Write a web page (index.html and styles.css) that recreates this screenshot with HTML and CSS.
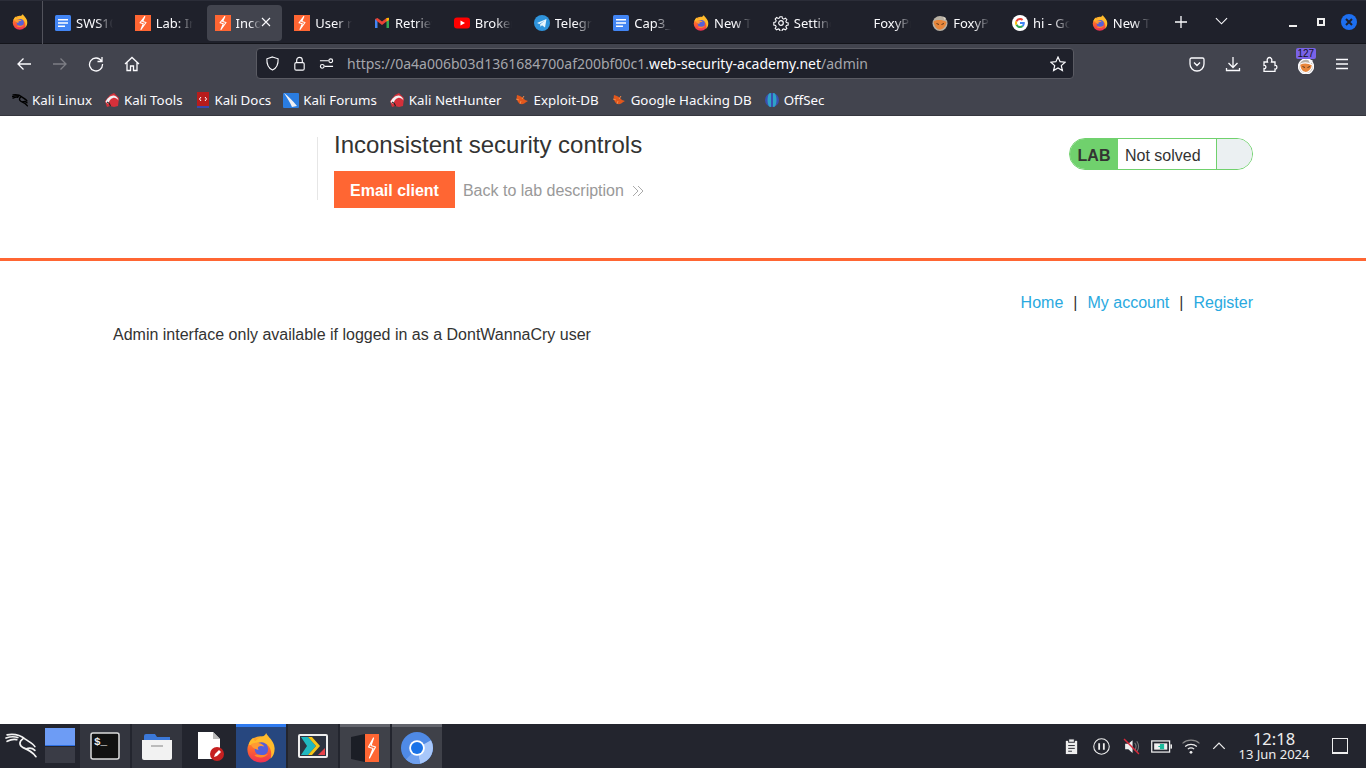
FILE: index.html
```html
<!DOCTYPE html>
<html lang="en">
<head>
    <meta charset="UTF-8">
    <meta name="viewport" content="width=device-width, initial-scale=1.0">
    <title>Inconsistent security controls</title>
    <link rel="stylesheet" href="styles.css">
</head>
<body>
    <svg class="defs" width="0" height="0">
        <defs>
            <linearGradient id="fx-body" x1="0" y1="0" x2="0" y2="1">
                <stop offset="0" stop-color="#ffb32c"/>
                <stop offset=".45" stop-color="#ff6b2c"/>
                <stop offset="1" stop-color="#ee2f54"/>
            </linearGradient>
            <symbol id="fx" viewBox="0 0 32 32">
                <circle cx="15.500" cy="17.500" r="14" fill="url(#fx-body)"/>
                <path d="M3 12C4 8 6 6 8 5c0 2 1 3 2 3.500C12 6 15 5 17 4c3-1 4-2.500 4.500-4C23 4 30 8 30.500 16c.3 5-1.500 9-4.500 11.500 2-5 1-12-4-15.500-4-3-10-3-13 0-2 .8-4 .8-6 .5z" fill="#ffbb2c"/>
                <circle cx="16.500" cy="17" r="7.200" fill="#5560d8"/>
                <path d="M5 12c3-2 8-2.500 12 0 1 .7 2 1.500 2.500 2.500-2-1-5-1-6.500.5-.6.800-.4 2 .5 3-4-.3-7-2.500-8.500-6z" fill="#ff9a33"/>
                <path d="M9 24c3 2.500 8 3 12 .5 1-.6 2-1.500 2.500-2.500-2 1-7 2-11 1-1.500 0-2.500.5-3.500 1z" fill="#ff8a2b"/>
            </symbol>
            <symbol id="doc" viewBox="0 0 16 16">
                <rect width="16" height="16" rx="1.500" fill="#4285f4"/>
                <path d="M3 4h10v1.600H3zM3 7.200h10v1.600H3zM3 10.400h7v1.600H3z" fill="#fff"/>
            </symbol>
            <symbol id="burp" viewBox="0 0 16 16">
                <rect width="16" height="16" fill="#ff6633"/>
                <path d="M9.800 1.500 5 7.800l3.300 1L6 14.500l5-7-3.300-1z" fill="none" stroke="#fff" stroke-width="1.100" stroke-linejoin="round"/>
            </symbol>
            <symbol id="gmail" viewBox="0 0 16 16">
                <path d="M1 13V4l2.500 1v8z" fill="#4285f4"/>
                <path d="M12.500 13V5L15 4v9z" fill="#34a853"/>
                <path d="M1 4l2.500-1L8 6.500 12.500 3 15 4v1l-2.500 1.500L8 10 3.500 6.500z" fill="#ea4335"/>
                <path d="M12.500 3 15 2.800V5l-2.500 1.500z" fill="#fbbc04"/>
            </symbol>
            <symbol id="yt" viewBox="0 0 16 16">
                <rect y="2.500" width="16" height="11" rx="3" fill="#f00"/>
                <path d="M6.500 5.500v5L11 8z" fill="#fff"/>
            </symbol>
            <symbol id="tg" viewBox="0 0 16 16">
                <circle cx="8" cy="8" r="8" fill="#2f94dc"/>
                <path d="M3 8l9.500-4-1.500 8.500-3-2.200-1.500 1.500-.4-2.600L11 5.500 5.300 9z" fill="#e9f5fc"/>
            </symbol>
            <symbol id="gear" viewBox="0 0 16 16">
                <circle cx="8" cy="8" r="2.300" fill="none" stroke="#fbfbfe" stroke-width="1.200"/>
                <path d="M6.800 1h2.400l.4 2 1.500.7 1.800-1.100 1.600 1.700-1.100 1.800.6 1.400 2 .5v2.300l-2 .5-.6 1.400 1.100 1.800-1.600 1.700-1.800-1.100-1.500.6-.4 2H6.800l-.4-2-1.500-.6-1.800 1.100-1.600-1.700 1.100-1.800-.6-1.400-2-.5V7.300l2-.5.6-1.400-1.100-1.800 1.600-1.700 1.800 1.100 1.500-.7z" transform="translate(.8 .8) scale(.9)" fill="none" stroke="#fbfbfe" stroke-width="1.200"/>
            </symbol>
            <symbol id="fox" viewBox="0 0 16 16">
                <circle cx="8" cy="8.500" r="7.500" fill="#b9b1a4"/>
                <path d="M1.500 6.500C5 4.500 10 4.500 14.500 7 14 12 10 15 7 14.500 4 14 2 10 1.500 6.500z" fill="#e8863a"/>
                <path d="M4.500 8.500l2.500 1M9.500 9.500l2.500-1" stroke="#5b3a1f" stroke-width="1"/>
                <path d="M11 1.500l3 1.500-1.500 2z" fill="#ddd6c8"/>
            </symbol>
            <symbol id="google" viewBox="0 0 16 16">
                <circle cx="8" cy="8" r="8" fill="#fff"/>
                <path d="M12.800 8.100c0-.4 0-.7-.1-1H8v1.900h2.700c-.1.700-.5 1.200-1 1.600l1.600 1.200c.9-.9 1.500-2.200 1.500-3.700z" fill="#4285f4"/>
                <path d="M8 13c1.300 0 2.400-.4 3.300-1.200l-1.600-1.200c-.4.300-1 .5-1.700.5-1.300 0-2.400-.9-2.800-2l-1.600 1.200C4.400 11.900 6.100 13 8 13z" fill="#34a853"/>
                <path d="M5.200 9.100c-.2-.7-.2-1.500 0-2.200L3.600 5.700c-.7 1.400-.7 3.200 0 4.600z" fill="#fbbc05"/>
                <path d="M8 5c.7 0 1.400.3 1.900.7l1.400-1.400C10.400 3.500 9.300 3 8 3 6.100 3 4.400 4.100 3.600 5.700l1.600 1.200C5.600 5.800 6.700 5 8 5z" fill="#ea4335"/>
            </symbol>
            <symbol id="kali-red" viewBox="0 0 16 16">
                <path d="M1 9l5-6 4-2 5 5-1 8-4 1-4-1-3 1z" fill="#d5303a"/>
                <path d="M1.500 10C3 6 7 3 10 3.500c2.500.5 4 2.500 4.500 5-1.500-2-3.500-3-5.500-2.500C6.500 6.500 5 9 4.500 12z" fill="#f1f1f3"/>
                <path d="M3 10c1.500.5 3 2 3.500 4" fill="none" stroke="#222" stroke-width="1.100"/>
            </symbol>
            <symbol id="bug" viewBox="0 0 16 16">
                <path d="M3 3c3 .5 6 2.500 8 5l3 1-2.500 1.500C9 13 6 12.500 4 10 2.500 8 2.500 5 3 3z" fill="#e2571c"/>
                <path d="M2 7l3 1M6 12l1-3M10 4 8 7" stroke="#f08a4a" stroke-width="1"/>
            </symbol>
            <symbol id="dragon" viewBox="0 0 30 24">
                <g fill="none" stroke="currentColor" stroke-linecap="round">
                    <path d="M2 2.500C8 1.500 14 2.500 19 6.500c3 2.200 7 4 9 7"/>
                    <path d="M1 5.500C5 4 9 4 12 5"/>
                    <path d="M2 8.500C5 7 8 6 11 7"/>
                    <path d="M17 6c-4 2.500-4 6.500 0 8.500 5 2 9 4 12 8.500"/>
                    <path d="M20 15.500c3-1 6-.5 8 1.500"/>
                </g>
            </symbol>
        </defs>
    </svg>

    <div class="tabbar">
        <div class="tab-menu"><svg class="ico16"><use href="#fx"/></svg></div>
        <div class="tabs">
            <div class="tab"><svg class="ico16"><use href="#doc"/></svg><span class="tab-label">SWS101</span></div>
            <div class="tab"><svg class="ico16"><use href="#burp"/></svg><span class="tab-label">Lab: Inconsistent</span></div>
            <div class="tab active"><svg class="ico16"><use href="#burp"/></svg><span class="tab-label">Inconsistent</span>
                <svg class="tab-close" viewBox="0 0 10 10"><path d="M1 1l8 8M9 1l-8 8"/></svg>
            </div>
            <div class="tab"><svg class="ico16"><use href="#burp"/></svg><span class="tab-label">User role</span></div>
            <div class="tab"><svg class="ico16"><use href="#gmail"/></svg><span class="tab-label">Retrieve</span></div>
            <div class="tab"><svg class="ico16"><use href="#yt"/></svg><span class="tab-label">Broken</span></div>
            <div class="tab"><svg class="ico16"><use href="#tg"/></svg><span class="tab-label">Telegram</span></div>
            <div class="tab"><svg class="ico16"><use href="#doc"/></svg><span class="tab-label">Cap3_</span></div>
            <div class="tab"><svg class="ico16"><use href="#fx"/></svg><span class="tab-label">New Tab</span></div>
            <div class="tab"><svg class="ico16"><use href="#gear"/></svg><span class="tab-label">Settings</span></div>
            <div class="tab"><span class="ico16"></span><span class="tab-label">FoxyProxy</span></div>
            <div class="tab"><svg class="ico16"><use href="#fox"/></svg><span class="tab-label">FoxyProxy</span></div>
            <div class="tab"><svg class="ico16"><use href="#google"/></svg><span class="tab-label">hi - Google</span></div>
            <div class="tab"><svg class="ico16"><use href="#fx"/></svg><span class="tab-label">New Tab</span></div>
        </div>
        <svg class="tab-plus" viewBox="0 0 14 14"><path d="M7 1v12M1 7h12"/></svg>
        <svg class="tab-list" viewBox="0 0 14 8"><path d="M1 1l6 6 6-6"/></svg>
        <div class="win-btns">
            <span class="win-min"></span>
            <span class="win-max"></span>
            <span class="win-close"><svg viewBox="0 0 10 10"><path d="M2 2l6 6M8 2l-6 6"/></svg></span>
        </div>
    </div>

    <div class="toolbar">
        <button class="tb-btn"><svg viewBox="0 0 16 16"><path d="M15 8H2M7.500 2.500 2 8l5.500 5.500"/></svg></button>
        <button class="tb-btn dim"><svg viewBox="0 0 16 16"><path d="M1 8h13M8.500 2.500 14 8l-5.500 5.500"/></svg></button>
        <button class="tb-btn"><svg viewBox="0 0 16 16"><path d="M13.500 5A6.500 6.500 0 1 0 14.500 8M14 1v4.500H9.500"/></svg></button>
        <button class="tb-btn"><svg viewBox="0 0 16 16"><path d="M1 8l7-6.500L15 8M3 6.500V14.500h3.500V10h3v4.500H13V6.500"/></svg></button>
        <div class="urlbar">
            <svg class="url-ico" viewBox="0 0 16 16"><path d="M8 1l6 2c.3 6-1.500 10-6 12C3.500 13 1.700 9 2 3z"/></svg>
            <svg class="url-ico" viewBox="0 0 16 16"><rect x="3" y="7" width="10" height="8" rx="1.500"/><path d="M5 7V4.500a3 3 0 0 1 6 0V7"/></svg>
            <svg class="url-ico" viewBox="0 0 16 16"><circle cx="3.500" cy="11" r="2"/><circle cx="12.500" cy="5" r="2"/><path d="M1 5h9M6 11h9"/></svg>
            <span class="url-text">https://0a4a006b03d1361684700af200bf00c1.<b>web-security-academy.net</b>/admin</span>
            <svg class="url-star" viewBox="0 0 16 16"><path d="M8 1l2.100 4.700 5 .5-3.800 3.400 1.100 5L8 12l-4.400 2.600 1.100-5L.9 6.200l5-.5z"/></svg>
        </div>
        <div class="tb-right">
            <button class="tb-btn"><svg viewBox="0 0 16 16"><path d="M2.500 2h11c.8 0 1.500.7 1.500 1.500V8a7 7 0 0 1-14 0V3.500C1 2.700 1.700 2 2.500 2zM5 6.500l3 3 3-3"/></svg></button>
            <button class="tb-btn"><svg viewBox="0 0 16 16"><path d="M8 1v10M3.500 7 8 11.500 12.500 7M1.500 12v2.500h13V12"/></svg></button>
            <button class="tb-btn"><svg viewBox="0 0 16 16"><path d="M2 6h3.500c-1-3 .5-4.500 2-4.500S10.500 3 9.500 6H13v3.500c2.500-.8 2.500 4 0 3.500v2.500H2v-3c2.500.8 2.500-3.800 0-3z"/></svg></button>
            <button class="tb-btn fox-btn"><svg class="ico16"><use href="#fox"/></svg><span class="badge">127</span></button>
            <button class="tb-btn"><svg viewBox="0 0 16 16"><path d="M2 3.500h12M2 8h12M2 12.500h12"/></svg></button>
        </div>
    </div>

    <div class="bookmarks">
        <a class="bm"><svg class="ico16 drag"><use href="#dragon"/></svg>Kali Linux</a>
        <a class="bm"><svg class="ico16"><use href="#kali-red"/></svg>Kali Tools</a>
        <a class="bm"><svg class="ico16" viewBox="0 0 16 16"><rect x="2" y="0" width="12" height="16" fill="#b71c1c"/><rect x="2" y="14" width="12" height="2" fill="#3949ab"/><path d="M6 5 4.500 7 6 9M10 5l1.500 2L10 9" stroke="#fff" fill="none"/></svg>Kali Docs</a>
        <a class="bm"><svg class="ico16" viewBox="0 0 16 16"><rect y="1" width="16" height="15" rx="1" fill="#2a7de1"/><path d="M1 1c4 3 9 8 13 13L9 15C7 10 4 6 1 1z" fill="#f0f0f2"/></svg>Kali Forums</a>
        <a class="bm"><svg class="ico16"><use href="#kali-red"/></svg>Kali NetHunter</a>
        <a class="bm"><svg class="ico16"><use href="#bug"/></svg>Exploit-DB</a>
        <a class="bm"><svg class="ico16"><use href="#bug"/></svg>Google Hacking DB</a>
        <a class="bm"><svg class="ico16" viewBox="0 0 16 16"><circle cx="8" cy="8" r="7" fill="#3a4fb0"/><path d="M5 1.500C3 5 3 11 5 14.500L7 15V1zM11 1.500c2 3.500 2 9.500 0 13L9 15V1z" fill="#2ea3c7"/></svg>OffSec</a>
    </div>

    <main class="page">
        <section class="lab-header">
            <div class="lab-title-block">
                <h2>Inconsistent security controls</h2>
                <div class="lab-links">
                    <a class="btn-email">Email client</a>
                    <a class="back-link">Back to lab description
                        <svg viewBox="0 0 12 12"><path d="M1 1l5 5-5 5M6 1l5 5-5 5"/></svg>
                    </a>
                </div>
            </div>
            <div class="lab-status">
                <span class="lab-tag">LAB</span>
                <span class="lab-state">Not solved</span>
                <span class="lab-end"></span>
            </div>
        </section>
        <section class="content">
            <nav class="top-links">
                <a>Home</a><span>|</span><a>My account</a><span>|</span><a>Register</a>
            </nav>
            <p class="notice">Admin interface only available if logged in as a DontWannaCry user</p>
        </section>
    </main>

    <footer class="taskbar">
        <div class="kali-start"><svg class="dragon" viewBox="0 0 30 24"><use href="#dragon"/></svg></div>
        <div class="pager"><span class="desk on"></span><span class="desk"></span></div>
        <div class="task open">
            <svg viewBox="0 0 30 28"><rect x="1" y="1" width="28" height="26" rx="2" fill="#111" stroke="#dcdcdc" stroke-width="1.500"/><text x="4" y="13" class="term-text">$_</text></svg>
        </div>
        <div class="task open">
            <svg viewBox="0 0 30 28"><path d="M2 4q0-2 2-2h9l2 3h13v6H2z" fill="#3b78d8"/><path d="M0 8h30v18q0 2-2 2H2q-2 0-2-2z" fill="#f2f2f2"/><rect x="9" y="13" width="12" height="2" fill="#bbb"/></svg>
        </div>
        <div class="task">
            <svg viewBox="0 0 30 30"><path d="M4 1h15l7 7v20H4z" fill="#fff"/><path d="M19 1l7 7h-7z" fill="#bbb"/><circle cx="23" cy="23" r="7" fill="#c62020"/><path d="M20 26l1-3 4-4 2 2-4 4z" fill="#fff"/></svg>
        </div>
        <div class="task active"><svg viewBox="0 0 32 32"><use href="#fx"/></svg></div>
        <div class="task open">
            <svg viewBox="0 0 30 24"><rect x="1" y="1" width="28" height="22" rx="1" fill="#2d3340" stroke="#eee" stroke-width="2"/><path d="M3 3h7l8 9-8 9H3l6-9z" fill="#20b8c0"/><path d="M10 3h4l8 9-8 9h-4l8-9z" fill="#f5c518"/><path d="M20 21l7-7v7z" fill="#e8434a"/></svg>
        </div>
        <div class="task open bar">
            <svg viewBox="0 0 30 28"><path d="M1 3l14-3v28L1 25z" fill="#1b1e26"/><rect x="15" y="0" width="14" height="28" fill="#ff6633"/><path d="M23.500 4 18.500 13l4.500 1.500-3.500 9.500 6-11-4.500-1.500z" fill="none" stroke="#fff" stroke-width="1.200" stroke-linejoin="round"/></svg>
        </div>
        <div class="task open bar">
            <svg class="chrome" viewBox="0 0 32 32"><circle cx="16" cy="16" r="16" fill="#4f8ae6"/><path d="M30 8.300A16 16 0 0 1 19 31.700L16 16z" fill="#a8c7fa"/><path d="M19 31.700A16 16 0 0 1 5 27.600L16 16z" fill="#6fa0ee"/><circle cx="16" cy="16" r="7.800" fill="#fff"/><circle cx="16" cy="16" r="6" fill="#1a73e8"/></svg>
        </div>
        <div class="tray">
            <span class="tray-slot"><svg class="tray-ico" viewBox="0 0 16 18"><path d="M2 3h12v14H2z" fill="#eee"/><rect x="5" y="1" width="6" height="3.500" fill="#eee" stroke="#23252e"/><path d="M4.500 8h7M4.500 11h7M4.500 14h4" stroke="#23252e"/></svg></span>
            <span class="tray-slot"><svg class="tray-ico" viewBox="0 0 16 16"><circle cx="8" cy="8" r="7.300" fill="none" stroke="#eee" stroke-width="1"/><path d="M5.800 5v6M10.200 5v6" stroke="#eee" stroke-width="1.700"/></svg></span>
            <span class="tray-slot"><svg class="tray-ico" viewBox="0 0 16 16"><path d="M2 5.500h3L9 2v12l-4-3.500H2z" fill="#eee"/><path d="M11 4.500c1.500 2 1.500 5 0 7M13 3c2 3 2 7 0 10" stroke="#777" fill="none"/><path d="M1 1l14 14" stroke="#d9293a" stroke-width="1.400"/></svg></span>
            <span class="tray-slot"><svg class="tray-ico wide" viewBox="0 0 20 12"><rect x=".7" y=".7" width="17" height="10.600" fill="none" stroke="#eee" stroke-width="1.200"/><rect x="18.500" y="4" width="1.500" height="4" fill="#eee"/><rect x="3" y="3" width="12.500" height="6" fill="#eee"/><path d="M7 6h3M9 4h3v4H9z" fill="#1abc9c" stroke="#1abc9c"/></svg></span>
            <span class="tray-slot"><svg class="tray-ico wifi" viewBox="0 0 18 16"><path d="M1 5c4.500-4 11.500-4 16 0" stroke="#888" fill="none"/><path d="M3.500 8c3-2.700 8-2.700 11 0M6 10.500c1.700-1.400 4.300-1.400 6 0" stroke="#eee" fill="none"/><circle cx="9" cy="13.500" r="1.300" fill="#eee"/></svg></span>
            <svg class="tray-chev" viewBox="0 0 12 7"><path d="M1 6l5-5 5 5"/></svg>
            <div class="clock"><div class="clock-time">12:18</div><div class="clock-date">13 Jun 2024</div></div>
            <div class="show-desktop"></div>
        </div>
    </footer>
</body>
</html>
```

FILE: styles.css
```css
* {
    box-sizing: border-box;
}

html, body {
    height: 100%;
}

body {
    margin: 0;
    display: flex;
    flex-direction: column;
    height: 768px;
    overflow: hidden;
    font-family: "Noto Sans", sans-serif;
    background: #fff;
}

.defs {
    position: absolute;
}

.ico16 {
    width: 16px;
    height: 16px;
    flex: none;
    display: block;
}

/* tab strip */
.tabbar {
    height: 44px;
    flex: none;
    display: flex;
    align-items: center;
    background: #1f212b;
    border-top: 1px solid #2b2d38;
    border-bottom: 1px solid #14151b;
}

.tab-menu {
    width: 43px;
    height: 43px;
    flex: none;
    padding: 13px 0 0 12px;
    border-right: 1px solid #52535c;
}

.tabs {
    display: flex;
    margin-left: 3px;
    flex: none;
}

.tab {
    width: 79.750px;
    height: 36px;
    flex: none;
    margin-top: 2px;
    padding-left: 9px;
    display: flex;
    align-items: center;
    gap: 5px;
    position: relative;
    color: #fbfbfe;
    font-size: 13px;
    white-space: nowrap;
    overflow: hidden;
}

.tab.active::before {
    content: "";
    position: absolute;
    left: 1px;
    right: 3px;
    top: 0;
    bottom: 0;
    background: #42444e;
    border-radius: 4px;
}

.tab > * {
    position: relative;
}

.tab-label {
    width: 37px;
    overflow: hidden;
    -webkit-mask-image: linear-gradient(to right, #000 55%, transparent);
    mask-image: linear-gradient(to right, #000 55%, transparent);
}

.tab.active .tab-label {
    width: 25px;
}

.tab-close {
    position: absolute;
    left: 55px;
    top: 12px;
    width: 10px;
    height: 10px;
    fill: none;
    stroke: #fbfbfe;
    stroke-width: 1.100;
}

.tab-plus {
    width: 14px;
    height: 14px;
    margin-left: 11px;
    fill: none;
    stroke: #fbfbfe;
    stroke-width: 1.300;
    flex: none;
}

.tab-list {
    width: 13px;
    height: 8px;
    margin: -2px 0 0 27px;
    fill: none;
    stroke: #fbfbfe;
    stroke-width: 1.200;
    flex: none;
}

.win-btns {
    margin-left: auto;
    padding-right: 9px;
    display: flex;
    align-items: center;
    gap: 20px;
}

.win-min {
    width: 8px;
    height: 2px;
    margin-top: 7px;
    background: #eee;
}

.win-max {
    width: 8px;
    height: 8px;
    border: 2px solid #eee;
    margin-right: -3px;
}

.win-close {
    width: 16px;
    height: 16px;
    border-radius: 50%;
    background: #1d6ff0;
    margin-left: -1px;
    padding: 3px;
}

.win-close svg {
    display: block;
    width: 10px;
    height: 10px;
    fill: none;
    stroke: #1f212b;
    stroke-width: 2;
}

/* nav bar */
.toolbar {
    height: 40px;
    flex: none;
    display: flex;
    align-items: center;
    padding-left: 6px;
    background: #42444e;
}

.tb-btn {
    width: 36px;
    height: 32px;
    flex: none;
    padding: 0;
    border: none;
    background: none;
    display: flex;
    align-items: center;
    justify-content: center;
    position: relative;
}

.tb-btn svg {
    width: 16px;
    height: 16px;
    fill: none;
    stroke: #fbfbfe;
    stroke-width: 1.300;
}

.tb-btn.dim svg {
    stroke: #7d7e85;
}

.urlbar {
    width: 818px;
    height: 31px;
    margin: -1px 0 0 106px;
    flex: none;
    padding: 0 7px 0 8px;
    display: flex;
    align-items: center;
    gap: 12px;
    background: #1f212b;
    border: 1px solid #5a5b63;
    border-radius: 4px;
    font-size: 14px;
    color: #a5a6ab;
}

.url-ico, .url-star {
    width: 15px;
    height: 15px;
    flex: none;
    fill: none;
    stroke: #fbfbfe;
    stroke-width: 1.200;
}

.url-text {
    flex: 1;
    margin-left: 1px;
    white-space: nowrap;
}

.url-text b {
    font-weight: 400;
    color: #fbfbfe;
}

.url-star {
    width: 16px;
    height: 16px;
}

.tb-right {
    display: flex;
    margin-left: 105px;
}

.tb-right .tb-btn {
    width: 36.250px;
}

.fox-btn .badge {
    position: absolute;
    left: 8px;
    top: 0;
    width: 20px;
    height: 11px;
    background: #7a63e8;
    border-radius: 2px;
    color: #15141a;
    font-size: 10px;
    line-height: 11px;
    text-align: center;
}

.fox-btn .ico16 {
    margin-top: 4px;
}

/* bookmarks */
.bookmarks {
    height: 32px;
    flex: none;
    display: flex;
    align-items: center;
    padding: 0 0 0 12px;
    gap: 12px;
    background: #42444e;
    border-bottom: 1px solid #35363e;
    color: #fbfbfe;
    font-size: 13.330px;
    white-space: nowrap;
}

.bm {
    display: flex;
    align-items: center;
    gap: 4px;
}

.drag {
    color: #000;
    stroke-width: 2.600;
}

/* page */
.page {
    flex: 1;
    min-height: 0;
    font-family: "Liberation Sans", Arial, sans-serif;
    color: #333332;
    font-size: 16px;
}

.lab-header {
    height: 145px;
    padding: 21px 113px 0 317px;
    display: flex;
    justify-content: space-between;
    align-items: flex-start;
    border-bottom: 3px solid #ff6633;
}

.lab-title-block {
    height: 63px;
    padding-left: 16px;
    border-left: 1px solid #e6e6e6;
}

.lab-title-block h2 {
    margin: -7px 0 0;
    font-size: 24px;
    font-weight: 400;
    line-height: 30px;
    white-space: nowrap;
}

.lab-links {
    display: flex;
    align-items: center;
    margin-top: 11px;
}

.btn-email {
    height: 37px;
    padding: 0 16px;
    background: #ff6633;
    color: #fff;
    font-weight: 700;
    line-height: 39px;
    white-space: nowrap;
}

.back-link {
    margin: 2px 0 0 8px;
    display: flex;
    align-items: center;
    gap: 9px;
    color: #999;
    white-space: nowrap;
}

.back-link svg {
    width: 12px;
    height: 12px;
    margin-left: -1px;
    fill: none;
    stroke: #aaa;
    stroke-width: 1;
}

.lab-status {
    width: 184px;
    height: 32px;
    display: flex;
    margin-top: 1px;
    border: 1px solid #70d16d;
    border-radius: 16px;
    overflow: hidden;
    line-height: 32px;
}

.lab-tag {
    width: 48px;
    background: #70d16d;
    font-weight: 700;
    text-align: center;
    padding-top: 1px;
    line-height: 32px;
}

.lab-state {
    width: 99px;
    padding-left: 7px;
    line-height: 33px;
    border-right: 1px solid #70d16d;
}

.lab-end {
    flex: 1;
    background: #ebf0f2;
}

.content {
    padding: 33px 113px 0;
}

.top-links {
    display: flex;
    justify-content: flex-end;
    gap: 10px;
    line-height: 18px;
    color: #333332;
}

.top-links a {
    color: #29a9e0;
}

.notice {
    margin: 14px 0 0;
    line-height: 18px;
}

/* panel */
.taskbar {
    height: 44px;
    flex: none;
    display: flex;
    background: #23252e;
}

.kali-start {
    width: 45px;
    flex: none;
    padding: 7px 0 0 5px;
}

.dragon {
    display: block;
    width: 32px;
    height: 28px;
    color: #f2f2f2;
    stroke-width: 1.600;
}

.pager {
    width: 30px;
    flex: none;
    margin-top: 4px;
    margin-right: 5px;
    display: flex;
    flex-direction: column;
    gap: 1px;
    height: 35px;
}

.desk {
    flex: 1;
    background: #3a3c46;
}

.desk.on {
    background: #6d9cf5;
    border-bottom: 1px solid #2f6fe0;
}

.task {
    width: 50px;
    flex: none;
    margin-right: 2px;
    display: flex;
    align-items: center;
    justify-content: center;
}

.task svg {
    width: 30px;
    height: 30px;
}

.task svg.chrome {
    width: 32px;
    height: 32px;
}

.term-text {
    font-family: "Liberation Mono", monospace;
    font-size: 11px;
    font-weight: 700;
    fill: #eee;
}

.task.open {
    background: #33353e;
}

.task.bar {
    background: #3f4149;
    border-top: 3px solid #62646c;
}

.task.active {
    background: #27477f;
    border-top: 3px solid #2f7bf0;
}

.tray {
    margin-left: auto;
    display: flex;
    align-items: center;
    color: #eee;
}

.tray-slot {
    width: 30px;
    flex: none;
    display: flex;
    justify-content: center;
}

.tray-ico {
    width: 17px;
    height: 17px;
    display: block;
}

.tray-ico.wide {
    width: 21px;
}

.tray-ico.wifi {
    width: 22px;
}

.tray-chev {
    width: 14px;
    height: 8px;
    margin: 0 6px;
    fill: none;
    stroke: #eee;
    stroke-width: 1.100;
    flex: none;
}

.clock {
    width: 72px;
    margin-left: 6px;
    text-align: center;
    white-space: nowrap;
}

.clock-time {
    font-size: 16.500px;
    line-height: 17px;
}

.clock-date {
    font-size: 13px;
    line-height: 15px;
}

.show-desktop {
    width: 16px;
    height: 16px;
    margin: 0 18px 0 22px;
    border: 1px solid #eee;
    border-bottom-width: 2px;
}
```
